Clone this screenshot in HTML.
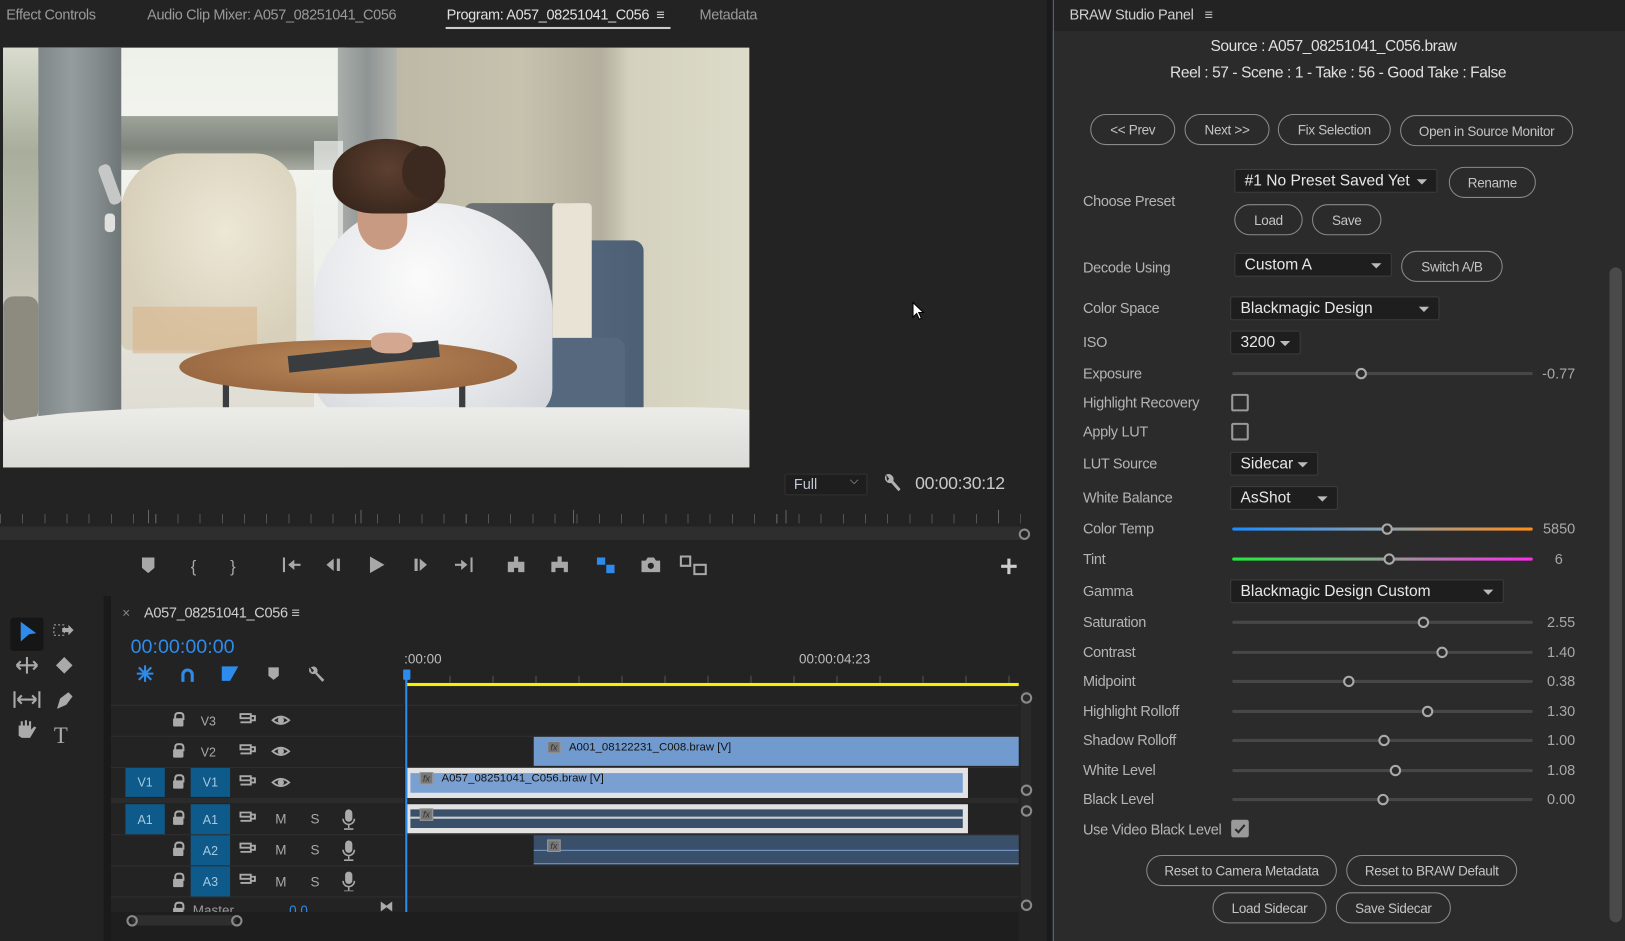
<!DOCTYPE html>
<html><head><meta charset="utf-8">
<style>
*{margin:0;padding:0;box-sizing:border-box}
html,body{width:1625px;height:941px;overflow:hidden;background:#1a1a1a;font-family:"Liberation Sans",sans-serif}
#w{position:absolute;left:0;top:0;width:1568px;height:908px;transform:scale(1.03635);transform-origin:0 0;background:#1a1a1a}
.a{position:absolute}
.t{position:absolute;white-space:nowrap}
.lbl{position:absolute;left:1045px;color:#b4b4b4;font-size:14px;letter-spacing:-0.3px;transform:translateY(-50%)}
.btn{position:absolute;border:1px solid #8a8a8a;border-radius:16px;color:#c4c4c4;font-size:13px;letter-spacing:-0.3px;display:flex;align-items:center;justify-content:center}
.dd{position:absolute;background:#1e1e1e;border:1px solid #3c3c3c;border-radius:2px;color:#e8e8e8;font-size:15px;padding-left:9px;display:flex;align-items:center;height:23px}
.dd:after{content:"";position:absolute;right:9px;top:9px;border-left:5px solid transparent;border-right:5px solid transparent;border-top:5px solid #bbb}
.trk{position:absolute;left:1189px;width:290px;height:3px;background:#474747;border-radius:2px}
.knob{position:absolute;width:11px;height:11px;border:2px solid #aaa;border-radius:50%;background:#2b2b2b;top:-4px;margin-left:-5px}
.val{position:absolute;right:48px;color:#a8a8a8;font-size:14px;transform:translateY(-50%)}
.cb{position:absolute;left:1188px;width:17px;height:17px;border:2px solid #9a9a9a;border-radius:2px}
.ic{position:absolute;color:#a9a9a9;font-size:14px;transform:translate(-50%,-50%)}
.hb{position:absolute;background:#0e5a8a;color:#a8c8e0;font-size:12px;display:flex;align-items:center;justify-content:center}
.row{position:absolute;left:107px;width:876px;height:1px;background:#2f2f2f}
.oc{position:absolute;width:11px;height:11px;border:2px solid #8a8a8a;border-radius:50%;margin:-5px}
.fx{position:absolute;width:13px;height:12px;background:#777;border:1px solid #999;font-size:9px;font-style:italic;color:#333;line-height:10px;text-align:center}
.lk{position:absolute;width:10px;height:8px;background:#aaa;border-radius:1px}
.lk:before{content:"";position:absolute;left:1px;top:-6px;width:6px;height:6px;border:2px solid #aaa;border-bottom:none;border-radius:4px 4px 0 0}
.tab{position:absolute;top:6px;font-size:14px;letter-spacing:-0.35px;white-space:nowrap}
</style></head><body><div id="w">

<!-- top tab bar -->
<div class="a" style="left:0;top:0;width:1010px;height:575px;background:#232323"></div>
<div class="tab" style="left:6px;color:#9a9a9a">Effect Controls</div>
<div class="tab" style="left:142px;color:#9a9a9a">Audio Clip Mixer: A057_08251041_C056</div>
<div class="tab" style="left:431px;color:#e0e0e0">Program: A057_08251041_C056 &nbsp;≡</div>
<div class="a" style="left:430px;top:26px;width:217px;height:2px;background:#ccc"></div>
<div class="tab" style="left:675px;color:#9a9a9a">Metadata</div>

<!-- video frame -->
<div class="a" style="left:3px;top:46px;width:720px;height:405px;overflow:hidden;background:#c8c3b0">
 <!-- wall -->
 <div class="a" style="left:380px;top:0;width:340px;height:405px;background:linear-gradient(90deg,#bdb9a6 0,#c6c2ae 35%,#b3ae9d 58%,#d4d1bf 66%,#dddbc9 100%)"></div>
 <!-- outdoor/window -->
 <div class="a" style="left:0;top:0;width:330px;height:405px;background:linear-gradient(180deg,#eef0ea 0,#f4f5f0 25%,#e6e5dc 60%,#dcdad0 100%)"></div>
 <div class="a" style="left:0;top:66px;width:330px;height:52px;background:linear-gradient(180deg,#9ea39a,#7f857c 60%,#a8aca2)"></div>
 <div class="a" style="left:0;top:0;width:34px;height:250px;background:linear-gradient(180deg,#d9dccf,#a8ae9b 40%,#c8c6ba)"></div>
 <div class="a" style="left:0;top:240px;width:34px;height:120px;background:#8d8a80;border-radius:10px"></div>
 <!-- wicker chair -->
 <div class="a" style="left:113px;top:102px;width:170px;height:190px;background:radial-gradient(ellipse at 60% 40%,#ece7d6,#d8d0ba 70%);border-radius:60px 40px 10px 10px"></div>
 <div class="a" style="left:125px;top:250px;width:120px;height:45px;background:#d9b58c;opacity:.6"></div>
 <!-- door frames -->
 <div class="a" style="left:34px;top:0;width:80px;height:405px;background:linear-gradient(90deg,#7f8789,#959c9e 40%,#858c8e 70%,#6f7678)"></div>
 <div class="a" style="left:97px;top:112px;width:12px;height:40px;background:#c5c8c6;border-radius:5px;transform:rotate(-20deg)"></div>
 <div class="a" style="left:98px;top:160px;width:10px;height:18px;background:#e0e0de;border-radius:4px"></div>
 <div class="a" style="left:323px;top:0;width:57px;height:360px;background:linear-gradient(90deg,#a9aeab,#8f9594 50%,#b0b3ad)"></div>
 <div class="a" style="left:300px;top:90px;width:28px;height:260px;background:rgba(240,242,238,.7)"></div>
 <!-- armchair -->
 <div class="a" style="left:506px;top:186px;width:112px;height:170px;background:linear-gradient(90deg,#5a6c80,#4d5f74);border-radius:10px"></div>
 <div class="a" style="left:445px;top:150px;width:112px;height:150px;background:linear-gradient(90deg,#6e7376,#5c6164);border-radius:8px"></div>
 <div class="a" style="left:530px;top:150px;width:38px;height:140px;background:#e8e3d4;border-radius:4px"></div>
 <div class="a" style="left:470px;top:280px;width:130px;height:80px;background:#55687e;border-radius:10px"></div>
 <!-- woman -->
 <div class="a" style="left:300px;top:150px;width:230px;height:210px;background:radial-gradient(ellipse at 45% 35%,#fbfbfb,#e8e9ec 55%,#cfd2d8);border-radius:45% 50% 15% 20%"></div>
 <div class="a" style="left:342px;top:140px;width:48px;height:55px;background:#c99a82;border-radius:40% 40% 50% 50%"></div>
 <div class="a" style="left:318px;top:88px;width:108px;height:72px;background:radial-gradient(ellipse at 50% 40%,#5d4030,#2f1f17);border-radius:50% 55% 40% 40%"></div>
 <div class="a" style="left:385px;top:95px;width:42px;height:50px;background:#3c2a20;border-radius:50%"></div>
 <!-- table -->
 <div class="a" style="left:212px;top:320px;width:6px;height:50px;background:#3a3c40"></div>
 <div class="a" style="left:440px;top:320px;width:6px;height:40px;background:#3a3c40"></div>
 <div class="a" style="left:170px;top:282px;width:326px;height:52px;background:radial-gradient(ellipse at 50% 40%,#b88859,#9c6a43 70%,#8a5a38);border-radius:50%"></div>
 <div class="a" style="left:275px;top:290px;width:146px;height:16px;background:#3a3d40;transform:rotate(-6deg)"></div>
 <div class="a" style="left:355px;top:275px;width:40px;height:20px;background:#d4a890;border-radius:40%"></div>
 <!-- bed -->
 <div class="a" style="left:-20px;top:347px;width:760px;height:80px;background:linear-gradient(180deg,#ecece9,#e2e2df 40%,#d4d4d0);border-radius:30% 10% 0 0"></div>
</div>
<!-- cursor -->
<svg class="a" style="left:880px;top:291px" width="14" height="20" viewBox="0 0 14 20"><path d="M1 1 L1 15 L4.5 11.5 L7 17 L9 16 L6.5 10.5 L11 10.5 Z" fill="#fff" stroke="#000" stroke-width="1"/></svg>

<div class="a" style="left:757px;top:457px;width:80px;height:21px;background:#1e1e1e;border:1px solid #333;border-radius:2px"></div>
<div class="t" style="left:766px;top:459px;color:#c0c8d8;font-size:14px">Full</div>
<div class="t" style="left:820px;top:458px;color:#aaa;font-size:11px">⌵</div>
<svg class="a" style="left:851px;top:456px" width="20" height="20" viewBox="0 0 20 20"><path d="M4 2 A5 5 0 0 0 9 10 L16 18 L18 16 L11 8 A5 5 0 0 0 4 2 L7 6 L5 8 Z" fill="#b0b0b0"/></svg>
<div class="t" style="left:883px;top:457px;color:#c8c8c8;font-size:17px;letter-spacing:-0.3px">00:00:30:12</div>

<!-- ruler -->
<div class="a" style="left:0;top:496px;width:985px;height:9px;background:repeating-linear-gradient(90deg,#555 0 1px,transparent 1px 21.4px)"></div>
<div class="a" style="left:0;top:492px;width:985px;height:13px;background:repeating-linear-gradient(90deg,transparent 0 143px,#666 143px 144px,transparent 144px 205px)"></div>
<div class="a" style="left:0;top:508px;width:985px;height:13px;background:#2e2e2e"></div>
<div class="oc" style="left:988px;top:515px"></div>

<!-- transport -->
<svg class="a" style="left:130px;top:533px" width="860" height="26" viewBox="130 533 860 26" fill="#a8a8a8">
 <path d="M137 538h12v10l-6 5-6-5z"/>
 <text x="184" y="552" font-size="16" fill="#a8a8a8" font-family="Liberation Sans">{</text>
 <text x="222" y="552" font-size="16" fill="#a8a8a8" font-family="Liberation Sans">}</text>
 <path d="M273 538v14h2v-14zM278 545l6-5v4h6v2h-6v4z"/>
 <path d="M315 545l7-6v12zM325 539h3v12h-3z"/>
 <path d="M357 537l14 8-14 8z"/>
 <path d="M400 539h3v12h-3zM405 539l7 6-7 6z"/>
 <path d="M439 544h6v-4l6 5-6 5v-4h-6zM454 538h2v14h-2z"/>
 <path d="M490 542h6v-5h4v5h6v10h-6v-4h-4v4h-6z"/>
 <path d="M532 542h6v-5h4v5h6v10h-4v-4h-8v4h-4z"/>
 <path d="M576 538h8v7h-8zM585 545h8v8h-8z" fill="#2d8ceb"/>
 <path d="M619 541h4l2-3h6l2 3h4v11h-18z"/><circle cx="628" cy="546" r="3" fill="#232323"/>
 <path d="M657 537h9v9h-9zM670 545h11v9h-11z" fill="none" stroke="#a8a8a8" stroke-width="2"/>
 <path d="M972 539h3v6h6v3h-6v6h-3v-6h-6v-3h6z" fill="#ccc"/>
</svg>

<!-- tools panel -->
<div class="a" style="left:0;top:575px;width:100px;height:333px;background:#232323"></div>
<div class="a" style="left:10px;top:596px;width:32px;height:32px;background:#161616;border-radius:3px"></div>
<svg class="a" style="left:0;top:590px" width="100" height="140" viewBox="0 590 100 140">
 <path d="M20 600l15 11-7 1 -8 7z" fill="#2d8ceb"/>
 <path d="M52 603h10v10h-10z" fill="none" stroke="#aaa" stroke-dasharray="2 2"/><path d="M60 606h6v-3l5 5-5 5v-3h-6z" fill="#aaa"/>
 <path d="M16 642h20M26 634v16M16 642l4-4M16 642l4 4M36 642l-4-4M36 642l-4 4" stroke="#aaa" stroke-width="2" fill="none"/>
 <path d="M54 642l8-8 8 8-8 8z" fill="#aaa"/>
 <path d="M14 667v16M38 667v16M17 675h18M17 675l4-4M17 675l4 4M35 675l-4-4M35 675l-4 4" stroke="#aaa" stroke-width="2" fill="none"/>
 <path d="M55 684l3-10 8-6 4 4-6 8z" fill="#aaa"/>
 <path d="M18 710v-10h2v-4h2v4h2v-5h2v5h2v-4h2v8l3-3 2 1-6 10h-8z" fill="#aaa"/>
 <text x="52" y="717" font-size="22" fill="#aaa" font-family="Liberation Serif">T</text>
</svg>

<!-- timeline panel -->
<div class="a" style="left:107px;top:575px;width:903px;height:333px;background:#232323"></div>
<div class="t" style="left:118px;top:584px;color:#888;font-size:13px">×</div>
<div class="t" style="left:139px;top:583px;color:#cfcfcf;font-size:14px;letter-spacing:-0.3px">A057_08251041_C056 ≡</div>
<div class="t" style="left:126px;top:614px;color:#2d8ceb;font-size:19px">00:00:00:00</div>
<svg class="a" style="left:125px;top:640px" width="200" height="22" viewBox="125 640 200 22">
 <path d="M132 650h16M140 642v16M134 644l12 12M146 644l-12 12" stroke="#2d8ceb" stroke-width="2"/>
 <path d="M175 658v-7a6 6 0 0 1 12 0v7h-3v-7a3 3 0 0 0-6 0v7z" fill="#2d8ceb"/>
 <path d="M214 643h16l-8 14h-8z" fill="#2d8ceb"/>
 <path d="M259 644h10v8l-5 4-5-4z" fill="#aaa"/>
 <path d="M299 644a4 4 0 0 0 5 6l7 8 2-2-7-7a4 4 0 0 0-6-5l3 3-2 2z" fill="#aaa"/>
</svg>
<div class="t" style="left:390px;top:628px;color:#bdbdbd;font-size:13px">:00:00</div>
<div class="t" style="left:771px;top:628px;color:#bdbdbd;font-size:13px">00:00:04:23</div>
<div class="a" style="left:392px;top:652px;width:591px;height:7px;background:repeating-linear-gradient(90deg,#555 0 1px,transparent 1px 41.5px)"></div>
<div class="a" style="left:392px;top:659px;width:591px;height:3px;background:#f5f000"></div>

<div class="a" style="left:107px;top:680px;width:876px;height:1px;background:#2f2f2f"></div>
<div class="row" style="top:710px"></div><div class="row" style="top:740px"></div>
<div class="a" style="left:107px;top:770px;width:876px;height:5px;background:#2b2b2b"></div>
<div class="row" style="top:805px"></div><div class="row" style="top:835px"></div><div class="row" style="top:865px"></div>
<div class="a" style="left:390px;top:680px;width:2px;height:200px;background:#1c1c1c"></div>

<!-- headers -->
<div class="hb" style="left:121px;top:741px;width:38px;height:28px">V1</div>
<div class="hb" style="left:184px;top:741px;width:38px;height:28px">V1</div>
<div class="hb" style="left:121px;top:776px;width:38px;height:29px">A1</div>
<div class="hb" style="left:184px;top:776px;width:38px;height:29px">A1</div>
<div class="hb" style="left:184px;top:806px;width:38px;height:29px">A2</div>
<div class="hb" style="left:184px;top:836px;width:38px;height:29px">A3</div>
<div class="ic" style="left:201px;top:696px;font-size:12px">V3</div>
<div class="ic" style="left:201px;top:726px;font-size:12px">V2</div>
<div class="lk" style="left:167px;top:693px"></div><div class="lk" style="left:167px;top:723px"></div><div class="lk" style="left:167px;top:753px"></div>
<div class="lk" style="left:167px;top:788px"></div><div class="lk" style="left:167px;top:818px"></div><div class="lk" style="left:167px;top:848px"></div>
<svg class="a" style="left:225px;top:685px" width="60" height="180" viewBox="225 685 60 180" fill="none" stroke="#aaa" stroke-width="1.8">
 <path d="M232 689h10v4h-10zM232 697h10v-4M242 691h4v4h-4"/><path d="M232 719h10v4h-10zM232 727h10v-4M242 721h4v4h-4"/><path d="M232 749h10v4h-10zM232 757h10v-4M242 751h4v4h-4"/>
 <path d="M232 784h10v4h-10zM232 792h10v-4M242 786h4v4h-4"/><path d="M232 814h10v4h-10zM232 822h10v-4M242 816h4v4h-4"/><path d="M232 844h10v4h-10zM232 852h10v-4M242 846h4v4h-4"/>
 <path d="M263 695q8-7 16 0q-8 7-16 0z"/><path d="M263 725q8-7 16 0q-8 7-16 0z"/><path d="M263 755q8-7 16 0q-8 7-16 0z"/>
</svg>
<div class="a" style="left:268px;top:692px;width:6px;height:6px;border-radius:50%;background:#aaa"></div>
<div class="a" style="left:268px;top:722px;width:6px;height:6px;border-radius:50%;background:#aaa"></div>
<div class="a" style="left:268px;top:752px;width:6px;height:6px;border-radius:50%;background:#aaa"></div>
<div class="ic" style="left:271px;top:790px;font-size:13px">M</div><div class="ic" style="left:271px;top:820px;font-size:13px">M</div><div class="ic" style="left:271px;top:851px;font-size:13px">M</div>
<div class="ic" style="left:304px;top:790px;font-size:13px">S</div><div class="ic" style="left:304px;top:820px;font-size:13px">S</div><div class="ic" style="left:304px;top:851px;font-size:13px">S</div>
<svg class="a" style="left:328px;top:780px" width="18" height="80" viewBox="328 780 18 80" fill="#aaa">
 <rect x="333" y="781" width="7" height="12" rx="3.5"/><path d="M331 790a5.5 5.5 0 0 0 11 0M336.5 796v3M332 800h9" stroke="#aaa" fill="none" stroke-width="1.5"/>
 <rect x="333" y="811" width="7" height="12" rx="3.5"/><path d="M331 820a5.5 5.5 0 0 0 11 0M336.5 826v3M332 830h9" stroke="#aaa" fill="none" stroke-width="1.5"/>
 <rect x="333" y="841" width="7" height="12" rx="3.5"/><path d="M331 850a5.5 5.5 0 0 0 11 0M336.5 856v3M332 860h9" stroke="#aaa" fill="none" stroke-width="1.5"/>
</svg>
<div class="a" style="left:107px;top:866px;width:283px;height:14px;overflow:hidden"><div class="lk" style="left:60px;top:10px"></div><div class="t" style="left:79px;top:5px;color:#999;font-size:13px">Master</div><div class="t" style="left:172px;top:5px;color:#2d8ceb;font-size:13px">0.0</div></div>
<div class="t" style="left:366px;top:866px;color:#aaa;font-size:14px">⧓</div>
<div class="a" style="left:107px;top:880px;width:876px;height:28px;background:#1e1e1e"></div>
<div class="a" style="left:127px;top:883px;width:101px;height:10px;background:#2e2e2e;border-radius:5px"></div>
<div class="oc" style="left:127px;top:888px"></div><div class="oc" style="left:228px;top:888px"></div>

<!-- clips -->
<div class="a" style="left:515px;top:711px;width:468px;height:28px;background:#719bcf"></div>
<div class="fx" style="left:528px;top:715px">fx</div>
<div class="t" style="left:549px;top:715px;color:#111;font-size:11px">A001_08122231_C008.braw [V]</div>
<div class="a" style="left:393px;top:741px;width:541px;height:29px;background:#7aa0d2;border:4px solid #e2e2e2;border-width:5px 5px 5px 3px"></div>
<div class="fx" style="left:405px;top:745px">fx</div>
<div class="t" style="left:426px;top:745px;color:#111;font-size:11px">A057_08251041_C056.braw [V]</div>
<div class="a" style="left:393px;top:776px;width:541px;height:28px;background:#3a4f6a;border:5px solid #e2e2e2;border-width:5px 5px 5px 3px"></div>
<div class="a" style="left:396px;top:788px;width:533px;height:2px;background:#d0d0d0"></div>
<div class="fx" style="left:405px;top:780px">fx</div>
<div class="a" style="left:515px;top:806px;width:468px;height:28px;background:#3a4f6a;border-bottom:1px solid #7aa0d2"></div>
<div class="a" style="left:515px;top:820px;width:468px;height:1px;background:#7aa0d2"></div>
<div class="fx" style="left:528px;top:810px">fx</div>
<div class="a" style="left:391px;top:648px;width:2px;height:232px;background:#2d8ceb"></div>
<div class="a" style="left:389px;top:646px;width:7px;height:10px;background:#2d8ceb;border-radius:1px"></div>
<div class="a" style="left:985px;top:665px;width:10px;height:215px;background:#2a2a2a;border-radius:5px"></div>
<div class="oc" style="left:990px;top:673px"></div><div class="oc" style="left:990px;top:762px"></div><div class="oc" style="left:990px;top:782px"></div><div class="oc" style="left:990px;top:873px"></div>

<!-- right panel -->
<div class="a" style="left:1015px;top:0;width:553px;height:908px;background:#2b2b2b"></div>
<div class="a" style="left:1015px;top:0;width:553px;height:30px;background:#232323"></div>
<div class="a" style="left:1016px;top:0;width:1px;height:908px;background:#2d6fb0"></div>
<div class="t" style="left:1032px;top:6px;color:#cfcfcf;font-size:14px;letter-spacing:-0.3px">BRAW Studio Panel &nbsp;&nbsp;≡</div>
<div class="t" style="left:1168px;top:36px;color:#e0e0e0;font-size:15px;letter-spacing:-0.4px">Source : A057_08251041_C056.braw</div>
<div class="t" style="left:1129px;top:62px;color:#e0e0e0;font-size:15px;letter-spacing:-0.4px">Reel : 57 - Scene : 1 - Take : 56 - Good Take : False</div>
<div class="a" style="left:1553px;top:258px;width:12px;height:632px;background:#4a4a4a;border-radius:6px"></div>

<div class="btn" style="left:1052px;top:110px;width:82px;height:30px">&lt;&lt; Prev</div>
<div class="btn" style="left:1143px;top:110px;width:82px;height:30px">Next &gt;&gt;</div>
<div class="btn" style="left:1233px;top:110px;width:109px;height:30px">Fix Selection</div>
<div class="btn" style="left:1351px;top:111px;width:167px;height:30px">Open in Source Monitor</div>

<div class="lbl" style="top:194px">Choose Preset</div>
<div class="dd" style="left:1191px;top:163px;width:196px">#1 No Preset Saved Yet</div>
<div class="btn" style="left:1398px;top:161px;width:84px;height:30px">Rename</div>
<div class="btn" style="left:1191px;top:197px;width:66px;height:30px">Load</div>
<div class="btn" style="left:1266px;top:197px;width:67px;height:30px">Save</div>

<div class="lbl" style="top:258px">Decode Using</div>
<div class="dd" style="left:1191px;top:244px;width:152px">Custom A</div>
<div class="btn" style="left:1352px;top:242px;width:98px;height:30px">Switch A/B</div>

<div class="lbl" style="top:297px">Color Space</div>
<div class="dd" style="left:1187px;top:286px;width:202px">Blackmagic Design</div>
<div class="lbl" style="top:330px">ISO</div>
<div class="dd" style="left:1187px;top:319px;width:68px">3200</div>

<div class="lbl" style="top:360px">Exposure</div>
<div class="trk" style="top:359px"><div class="knob" style="left:124px"></div></div>
<div class="val" style="top:360px">-0.77</div>
<div class="lbl" style="top:388px">Highlight Recovery</div><div class="cb" style="top:380px"></div>
<div class="lbl" style="top:416px">Apply LUT</div><div class="cb" style="top:408px"></div>
<div class="lbl" style="top:447px">LUT Source</div>
<div class="dd" style="left:1187px;top:436px;width:85px">Sidecar</div>
<div class="lbl" style="top:480px">White Balance</div>
<div class="dd" style="left:1187px;top:469px;width:104px">AsShot</div>
<div class="lbl" style="top:510px">Color Temp</div>
<div class="trk" style="top:509px;background:linear-gradient(90deg,#1a8cff,#8aa0b0 50%,#ff8c1a)"><div class="knob" style="left:149px"></div></div>
<div class="val" style="top:510px">5850</div>
<div class="lbl" style="top:539px">Tint</div>
<div class="trk" style="top:538px;background:linear-gradient(90deg,#1aee3a,#90a090 50%,#ff2aee)"><div class="knob" style="left:151px"></div></div>
<div class="val" style="top:539px;right:60px">6</div>
<div class="lbl" style="top:570px">Gamma</div>
<div class="dd" style="left:1187px;top:559px;width:264px">Blackmagic Design Custom</div>

<div class="lbl" style="top:600px">Saturation</div><div class="trk" style="top:599px"><div class="knob" style="left:184px"></div></div><div class="val" style="top:600px">2.55</div>
<div class="lbl" style="top:629px">Contrast</div><div class="trk" style="top:628px"><div class="knob" style="left:202px"></div></div><div class="val" style="top:629px">1.40</div>
<div class="lbl" style="top:657px">Midpoint</div><div class="trk" style="top:656px"><div class="knob" style="left:112px"></div></div><div class="val" style="top:657px">0.38</div>
<div class="lbl" style="top:686px">Highlight Rolloff</div><div class="trk" style="top:685px"><div class="knob" style="left:188px"></div></div><div class="val" style="top:686px">1.30</div>
<div class="lbl" style="top:714px">Shadow Rolloff</div><div class="trk" style="top:713px"><div class="knob" style="left:146px"></div></div><div class="val" style="top:714px">1.00</div>
<div class="lbl" style="top:743px">White Level</div><div class="trk" style="top:742px"><div class="knob" style="left:157px"></div></div><div class="val" style="top:743px">1.08</div>
<div class="lbl" style="top:771px">Black Level</div><div class="trk" style="top:770px"><div class="knob" style="left:145px"></div></div><div class="val" style="top:771px">0.00</div>
<div class="lbl" style="top:800px">Use Video Black Level</div>
<div class="cb" style="top:791px;background:#9a9a9a;border-color:#9a9a9a"><svg width="13" height="13" viewBox="0 0 13 13" style="position:absolute;left:0;top:0"><path d="M2 7l3 3 6-7" stroke="#2b2b2b" stroke-width="2" fill="none"/></svg></div>

<div class="btn" style="left:1106px;top:825px;width:184px;height:30px">Reset to Camera Metadata</div>
<div class="btn" style="left:1299px;top:825px;width:165px;height:30px">Reset to BRAW Default</div>
<div class="btn" style="left:1170px;top:861px;width:110px;height:30px">Load Sidecar</div>
<div class="btn" style="left:1289px;top:861px;width:111px;height:30px">Save Sidecar</div>

</div></body></html>
